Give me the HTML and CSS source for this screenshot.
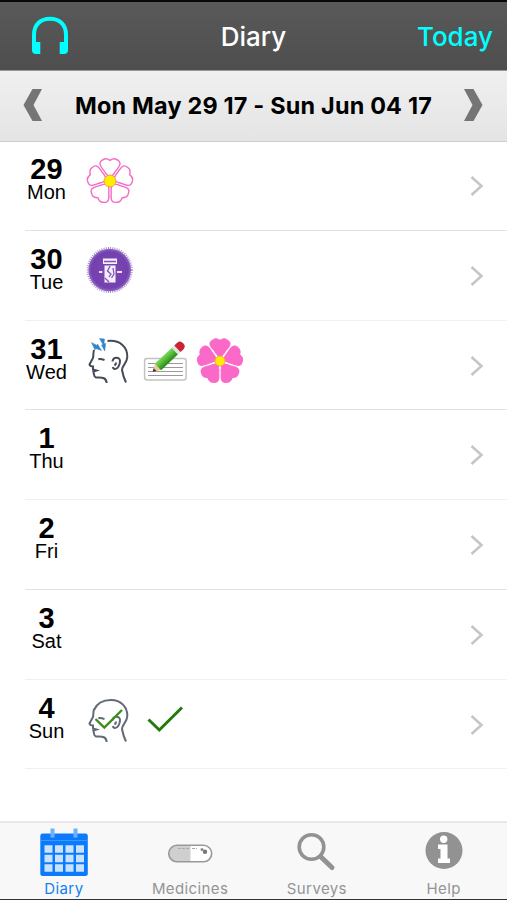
FILE: index.html
```html
<!DOCTYPE html>
<html lang="en">
<head>
    <meta charset="UTF-8">
    <meta name="viewport" content="width=device-width, initial-scale=1.0">
    <title>Diary</title>
    <link rel="stylesheet" href="styles.css">
</head>
<body>
    <!-- shared shapes -->
    <svg class="defs" width="0" height="0">
        <defs>
            <path id="petal" d="M0 -3 L-4.500 -8 C-6.500 -12 -10.500 -14 -10 -18 C-9.600 -20.300 -7.800 -20.500 -6.500 -21.600 C-4.500 -23 -2 -22 0 -20.700 C2 -22 4.500 -23 6.500 -21.600 C7.800 -20.500 9.600 -20.300 10 -18 C10.500 -14 6.500 -12 4.500 -8Z"/>
            <g id="flower">
                <use href="#petal"/>
                <use href="#petal" transform="rotate(72)"/>
                <use href="#petal" transform="rotate(144)"/>
                <use href="#petal" transform="rotate(216)"/>
                <use href="#petal" transform="rotate(288)"/>
            </g>
            <g id="face">
                <path d="M8 13 C7 17 7.500 19 7 21 L3.500 27.500 Q4 29.500 7 29.500 L7 32.500 L10.500 33.500 L7.300 34.500 C8.500 38 7.500 40 10 40.500 C14 41 20 39 20.700 46"/>
                <path d="M12.300 22.200 Q15 21.500 18.500 23.200"/>
                <path d="M26.500 24.500 C27 19.500 34 19.500 34 24 C34 28 31.500 32.500 28.500 32 Q27 31.500 26.800 30 M29.500 25.500 Q30.500 27 28.500 28.500"/>
            </g>
            <linearGradient id="pencilGreen" x1="0" y1="0" x2="0" y2="1">
                <stop offset="0" stop-color="#83d65c"/>
                <stop offset="0.5" stop-color="#4fb934"/>
                <stop offset="1" stop-color="#28861c"/>
            </linearGradient>
            <radialGradient id="purple">
                <stop offset="0" stop-color="#7b48ae"/>
                <stop offset="0.85" stop-color="#7440b0"/>
                <stop offset="1" stop-color="#8f68bf"/>
            </radialGradient>
        </defs>
    </svg>

    <header class="navbar">
        <svg class="headphones" width="38" height="40" viewBox="0 0 38 40">
            <path d="M3 32 V19 C3 8 10 2.800 19 2.800 S35 8 35 19 V32" fill="none" stroke="#0ff" stroke-width="4"/>
            <path d="M1 26 H9.300 V38 H5 Q1 38 1 34Z M37 26 H28.700 V38 H33 Q37 38 37 34Z" fill="#0ff"/>
        </svg>
        <h1 class="title">Diary</h1>
        <a class="today">Today</a>
    </header>

    <div class="weekbar">
        <svg width="20" height="32" viewBox="0 0 20 32"><path d="M9.500 0 H19 L10.500 16 L19 32 H9.500 L0.500 16Z" fill="#757575"/></svg>
        <span class="range">Mon May 29 17 - Sun Jun 04 17</span>
        <svg width="20" height="32" viewBox="0 0 20 32"><path d="M10.500 0 H1 L9.500 16 L1 32 H10.500 L19.500 16Z" fill="#757575"/></svg>
    </div>

    <ul class="days">
        <li class="day">
            <div class="date"><b>29</b><span>Mon</span></div>
            <div class="icons">
                <svg width="48" height="48" viewBox="0 0 48 48">
                    <g transform="translate(24 24)">
                        <use href="#flower" fill="#fff" stroke="#f46cc4" stroke-width="1.400"/>
                        <circle r="6" fill="#ffee00" stroke="#f59a55" stroke-width="1"/>
                    </g>
                </svg>
            </div>
            <svg class="arrow" width="14" height="22" viewBox="0 0 14 22"><path d="M1.500 2 L11.500 11 L1.500 20"/></svg>
        </li>
        <li class="day">
            <div class="date"><b>30</b><span>Tue</span></div>
            <div class="icons">
                <svg width="48" height="48" viewBox="0 0 48 48">
                    <circle cx="23.700" cy="23" r="22" fill="none" stroke="#a98bd0" stroke-width="2" stroke-dasharray="1 1.200"/>
                    <circle cx="23.700" cy="23" r="21.300" fill="url(#purple)"/>
                    <path d="M17 11.500 H31 V17 H17Z M18.500 18.500 H29.500 V35.500 H18.500Z" fill="#f5effc"/>
                    <path d="M18 14.500 H30 M24 19 L21.500 24 L25 27 L23 30 M27 21 L28 27 L25.500 31 M19 31 L23 35" fill="none" stroke="#8353b9" stroke-width="1.300"/>
                    <path d="M13 25 H16.500 M31 25 H36" stroke="#eee2fa" stroke-width="2"/>
                </svg>
            </div>
            <svg class="arrow" width="14" height="22" viewBox="0 0 14 22"><path d="M1.500 2 L11.500 11 L1.500 20"/></svg>
        </li>
        <li class="day">
            <div class="date"><b>31</b><span>Wed</span></div>
            <div class="icons">
                <svg width="48" height="48" viewBox="0 0 48 48">
                    <g fill="none" stroke="#454b57" stroke-width="2">
                        <use href="#face"/>
                        <path d="M21.500 4 C34 2.500 41.500 10 41.300 20 C41 27 36 28 36 33 Q37 39 40 45.500"/>
                    </g>
                    <path d="M5.500 5.500 L11 8.500 L11.500 7 L15.500 13.500 L9.500 11.500 L9 13Z M13.500 1.500 L18.500 2 L18 6.500 L19.700 6.500 L18.700 14 L15.500 8 L17 7.500Z" fill="#3483c8" stroke="#3483c8" stroke-width="0.500"/>
                </svg>
                <svg width="48" height="48" viewBox="0 0 48 48">
                    <rect x="3.600" y="21.500" width="41.500" height="21.500" rx="2.500" fill="#fff" stroke="#c3c3c3" stroke-width="1.500"/>
                    <path d="M7 26.500 H42 M7 30.500 H42 M7 34.500 H42 M7 38.500 H42" stroke="#999" stroke-width="1"/>
                    <!-- pencil, drawn flat and turned -->
                    <g transform="translate(11.500 35) rotate(-43)">
                        <path d="M0 0 L8 -4.500 V4.500Z" fill="#edc796"/>
                        <path d="M0 0 L3.500 -2 V2Z" fill="#333"/>
                        <rect x="7.500" y="-4.500" width="24" height="9" fill="url(#pencilGreen)"/>
                        <rect x="30.500" y="-4.500" width="4" height="9" fill="#dfe3df"/>
                        <path d="M34 -4.500 H38 Q42 -4.500 42 0 T38 4.500 H34Z" fill="#c92436"/>
                    </g>
                </svg>
                <svg width="48" height="48" viewBox="0 0 48 48">
                    <g transform="translate(24 24)">
                        <use href="#flower" fill="#fb69c8" stroke="#fb69c8" stroke-width="1"/>
                        <circle r="5" fill="#ffee00" stroke="#f9a63c" stroke-width="1"/>
                    </g>
                </svg>
            </div>
            <svg class="arrow" width="14" height="22" viewBox="0 0 14 22"><path d="M1.500 2 L11.500 11 L1.500 20"/></svg>
        </li>
        <li class="day">
            <div class="date"><b>1</b><span>Thu</span></div>
            <div class="icons"></div>
            <svg class="arrow" width="14" height="22" viewBox="0 0 14 22"><path d="M1.500 2 L11.500 11 L1.500 20"/></svg>
        </li>
        <li class="day">
            <div class="date"><b>2</b><span>Fri</span></div>
            <div class="icons"></div>
            <svg class="arrow" width="14" height="22" viewBox="0 0 14 22"><path d="M1.500 2 L11.500 11 L1.500 20"/></svg>
        </li>
        <li class="day">
            <div class="date"><b>3</b><span>Sat</span></div>
            <div class="icons"></div>
            <svg class="arrow" width="14" height="22" viewBox="0 0 14 22"><path d="M1.500 2 L11.500 11 L1.500 20"/></svg>
        </li>
        <li class="day">
            <div class="date"><b>4</b><span>Sun</span></div>
            <div class="icons">
                <svg width="48" height="48" viewBox="0 0 48 48">
                    <g fill="none" stroke="#626977" stroke-width="2">
                        <use href="#face"/>
                        <path d="M8 14 C11 7 17 4 25 4 C35 4 41.500 11 41.300 20 C41 27 36 28 36 33 Q37 39 40 45.500"/>
                    </g>
                    <path d="M9.500 23 L18.300 31.500 L36 14" fill="none" stroke="#3c8f1c" stroke-width="2.400"/>
                </svg>
                <svg width="48" height="48" viewBox="0 0 48 48">
                    <path d="M7.500 23.500 L18.300 34 L41 11.500" fill="none" stroke="#217c0c" stroke-width="3"/>
                </svg>
            </div>
            <svg class="arrow" width="14" height="22" viewBox="0 0 14 22"><path d="M1.500 2 L11.500 11 L1.500 20"/></svg>
        </li>
    </ul>

    <nav class="tabbar">
        <a class="tab active">
            <svg width="48" height="48" viewBox="0 0 48 48">
                <rect x="0.300" y="5.500" width="47.500" height="42.500" rx="2.500" fill="#0b7bfb"/>
                <path d="M1 12.500 H47" stroke="#3c98ff" stroke-width="1"/>
                <path d="M12.500 0.500 V9.500 M35.500 0.500 V9.500" stroke="#6eb1fb" stroke-width="4"/>
                <path d="M4.500 21 H44.500 M4.500 30.500 H44.500 M4.500 40 H44.500" stroke="#c9e2ff" stroke-width="7.500" stroke-dasharray="8 2.500"/>
            </svg>
            <span>Diary</span>
        </a>
        <a class="tab">
            <svg width="48" height="48" viewBox="0 0 48 48">
                <rect x="2.700" y="17.300" width="43" height="16.500" rx="8.200" fill="#fff"/>
                <path d="M24.500 17.300 H11 A8.250 8.250 0 0 0 11 33.800 H24.500Z" fill="#cfcfcf"/>
                <rect x="2.700" y="17.300" width="43" height="16.500" rx="8.200" fill="none" stroke="#999" stroke-width="1.600"/>
                <path d="M12 20.500 H24 M26 20.500 H31" stroke="#aaa" stroke-width="1" stroke-dasharray="3 1"/>
                <circle cx="39" cy="23.800" r="2.200" fill="#777"/>
                <circle cx="36" cy="21.500" r="1.500" fill="#888"/>
            </svg>
            <span>Medicines</span>
        </a>
        <a class="tab">
            <svg width="48" height="48" viewBox="0 0 48 48">
                <circle cx="18.500" cy="19" r="12.300" fill="none" stroke="#929292" stroke-width="3.600"/>
                <path d="M28 29 L39 39.500" stroke="#929292" stroke-width="5" stroke-linecap="round"/>
            </svg>
            <span>Surveys</span>
        </a>
        <a class="tab">
            <svg width="48" height="48" viewBox="0 0 48 48">
                <circle cx="24" cy="22.500" r="18.500" fill="#929292"/>
                <circle cx="23.700" cy="11.300" r="3.700" fill="#fff"/>
                <path d="M18 16.500 H27.500 V30.500 H30 V35 H18 V30.500 H20.500 V21 H18Z" fill="#fff"/>
            </svg>
            <span>Help</span>
        </a>
    </nav>
</body>
</html>
```
FILE: styles.css
```css
* {
    box-sizing: border-box;
}
body {
    margin: 0;
    height: 900px;
    display: flex;
    flex-direction: column;
    background: #fff;
    font-family: Inter, "Liberation Sans", sans-serif;
    overflow: hidden;
}
svg {
    display: block;
    flex: none;
}
.defs {
    position: absolute;
}

/* top bar */
.navbar {
    height: 71px;
    flex: none;
    display: grid;
    grid-template-columns: 1fr auto 1fr;
    align-items: center;
    padding: 0 14px 0 31px;
    border-top: 2px solid #080808;
    border-bottom: 1px solid #999;
    background: linear-gradient(#595959, #4e4e4e);
}
.title {
    margin: 2px 17px 0 0;
    font-size: 26px;
    font-weight: 500;
    line-height: 32px;
    color: #fff;
}
.today {
    justify-self: end;
    margin-top: 2px;
    font-size: 26px;
    font-weight: 500;
    line-height: 32px;
    color: #0ff;
}

/* week selector */
.weekbar {
    height: 71px;
    flex: none;
    display: flex;
    align-items: center;
    justify-content: space-between;
    padding: 0 24px 2px 23px;
    background: linear-gradient(#f0f0f0, #e4e4e4);
    border-bottom: 1.5px solid #cecece;
}
.range {
    margin: 1px 0 0 1px;
    font-size: 23.4px;
    font-weight: 650;
    letter-spacing: 0.2px;
    white-space: nowrap;
}

/* list of days */
.days {
    list-style: none;
    margin: -1px 0 0;
    padding: 0 0 0 25px;
    flex: 1;
}
.day {
    height: 89.75px;
    display: flex;
    border-bottom: 1.5px solid #e2e2e2;
}
.day:nth-child(even),
.day:last-child {
    border-bottom-color: #f0f0f0;
}
.date {
    width: 43px;
    padding-top: 14px;
    text-align: center;
    font-family: "Liberation Sans", Arial, sans-serif;
}
.date b {
    display: block;
    font-size: 29px;
    line-height: 28px;
}
.date span {
    display: block;
    font-size: 20px;
    line-height: 19px;
}
.icons {
    flex: 1;
    display: flex;
    gap: 7px;
    padding: 16px 0 0 18px;
}
.arrow {
    margin: 34px 23px 0 0;
    fill: none;
    stroke: #c5c5c5;
    stroke-width: 2.5;
}

/* bottom tabs */
.tabbar {
    height: 79px;
    flex: none;
    display: grid;
    grid-template-columns: repeat(4, 1fr);
    background: #f8f8f8;
    border-top: 2px solid #e8e8e8;
    border-bottom: 1.5px solid #333;
}
.tab {
    display: flex;
    flex-direction: column;
    align-items: center;
    padding-top: 5px;
    font-size: 15px;
    line-height: 18px;
    letter-spacing: 0.4px;
    color: #949494;
}
.tab span {
    margin-top: 4px;
}
.tab.active {
    padding-left: 1px;
    color: #1480f5;
}
```
